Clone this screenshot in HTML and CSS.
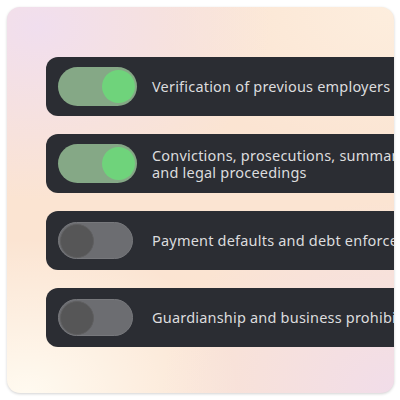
FILE: index.html
```
<!DOCTYPE html>
<html>
<head>
<meta charset="utf-8">
<link rel="stylesheet" href="styles.css">
</head>
<body>
<div class="card">
  <div class="list">
    <div class="row">
      <div class="toggle on"><span class="knob"></span></div>
      <div class="label">Verification of previous employers</div>
    </div>
    <div class="row">
      <div class="toggle on"><span class="knob"></span></div>
      <div class="label">Convictions, prosecutions, summary offences<br>and legal proceedings</div>
    </div>
    <div class="row">
      <div class="toggle off"><span class="knob"></span></div>
      <div class="label">Payment defaults and debt enforcement</div>
    </div>
    <div class="row">
      <div class="toggle off"><span class="knob"></span></div>
      <div class="label">Guardianship and business prohibitions</div>
    </div>
  </div>
</div>
</body>
</html>
```
FILE: styles.css
```
html, body {
  margin: 0;
  padding: 0;
  background: #ffffff;
}
body {
  width: 400px;
  height: 400px;
  padding: 7px;
  box-sizing: border-box;
}
.card {
  width: 387px;
  height: 386px;
  border-radius: 13px;
  overflow: hidden;
  box-shadow: 0 1px 3px rgba(0,0,0,0.18);
  background:
    radial-gradient(ellipse 60% 45% at 8% 5%, rgba(240,222,240,0.95), rgba(240,222,240,0) 100%),
    radial-gradient(ellipse 60% 50% at 100% 100%, rgba(240,220,236,0.9), rgba(240,220,236,0) 100%),
    radial-gradient(ellipse 55% 40% at 5% 100%, rgba(255,250,240,1), rgba(255,250,240,0) 100%),
    radial-gradient(ellipse 60% 40% at 100% 0%, rgba(253,238,222,1), rgba(253,238,222,0) 100%),
    #fbe4d2;
  padding: 50px 0 0 39px;
  box-sizing: border-box;
}
.list {
  display: flex;
  flex-direction: column;
  gap: 18px;
  width: 430px;
}
.row {
  height: 59px;
  background: #2b2d33;
  border-radius: 12px;
  display: flex;
  align-items: center;
  padding-left: 12px;
  box-sizing: border-box;
}
.toggle {
  flex: none;
  border-radius: 999px;
  display: flex;
  align-items: center;
  box-sizing: border-box;
}
.toggle.on {
  width: 79px;
  height: 39px;
  background: #85a886;
  justify-content: flex-end;
  padding-right: 2px;
}
.toggle.off {
  width: 75px;
  height: 37px;
  margin-right: 4px;
  background: #6c6d71;
  border: 1px solid #77787c;
  justify-content: flex-start;
  padding-left: 1px;
}
.knob {
  display: block;
  border-radius: 50%;
}
.toggle.on .knob {
  width: 33px;
  height: 33px;
  background: #6fd37b;
}
.toggle.off .knob {
  width: 34px;
  height: 34px;
  background: #565657;
  border: 1px solid #5f5f60;
  box-sizing: border-box;
}
.label {
  margin-left: 15px;
  font-family: "Noto Sans", sans-serif;
  font-size: 14.5px;
  line-height: 17px;
  color: #dcdcde;
  white-space: nowrap;
  letter-spacing: 0.2px;
}
```
